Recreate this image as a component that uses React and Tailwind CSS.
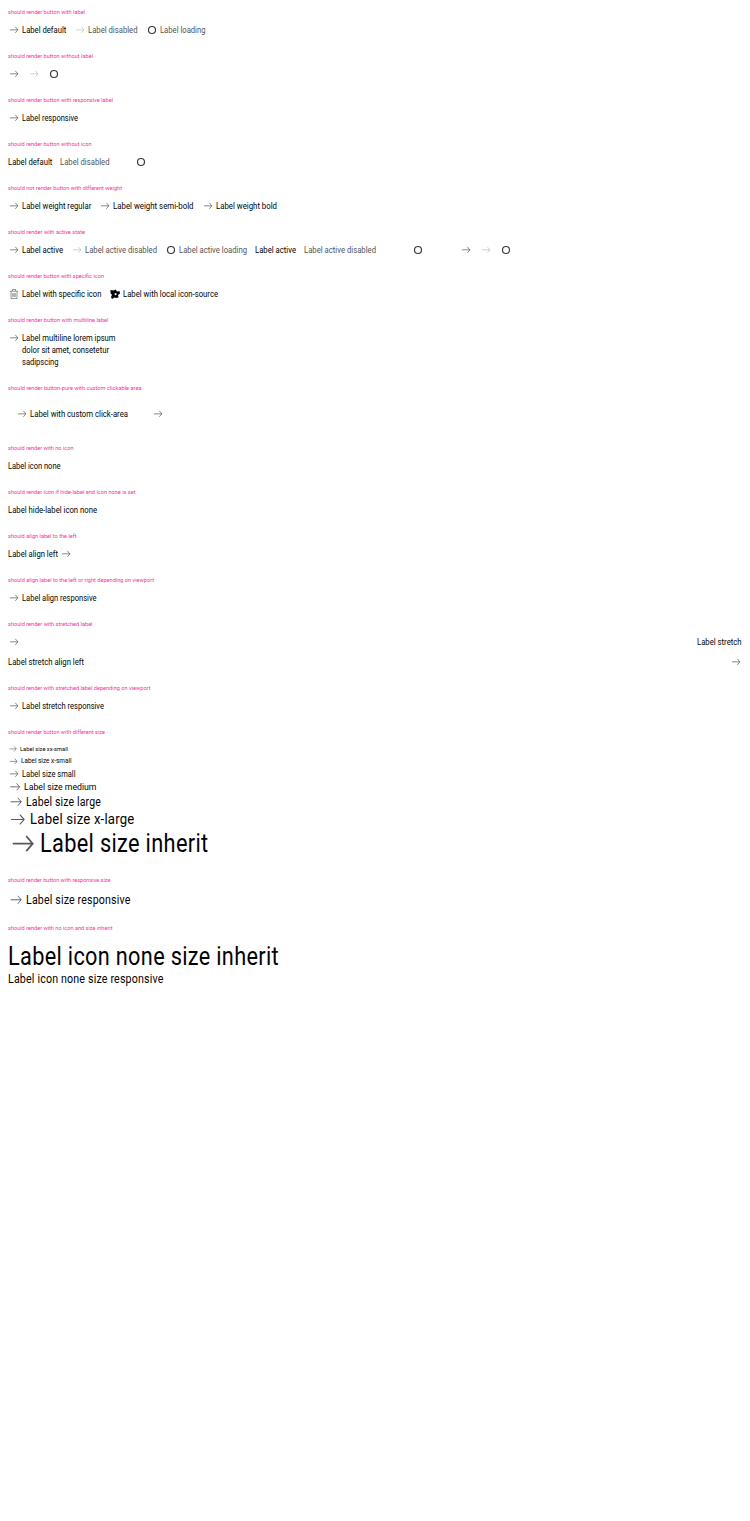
import { useLayoutEffect, useRef, useState } from "react";

// Text condensed horizontally so that it occupies exactly w pixels.
function Fit({ w, className = "", children }) {
  const ref = useRef(null);
  const [scale, setScale] = useState(1);
  useLayoutEffect(() => {
    setScale(w / parseFloat(getComputedStyle(ref.current).width));
  }, [w]);
  return (
    <span className={"block shrink-0 whitespace-nowrap " + className} style={{ width: w }}>
      <span ref={ref} className="inline-block origin-left" style={{ transform: `scaleX(${scale})` }}>
        {children}
      </span>
    </span>
  );
}

function Arrow({ className = "size-3", dim = false }) {
  return (
    <svg viewBox="0 0 24 24" className={"shrink-0 " + className} fill="none" stroke="#010205" strokeOpacity={dim ? 0.25 : 0.65} strokeWidth="1.4">
      <path d="M3.8 11.7h16M14.6 5.7l5.200 6-5.200 6" />
    </svg>
  );
}

function Spinner() {
  return (
    <svg viewBox="0 0 12 12" className="size-3 shrink-0" fill="none" stroke="#33353a" strokeWidth="1.15">
      <circle cx="6" cy="6" r="3.5" />
    </svg>
  );
}

function Trash() {
  return (
    <svg viewBox="0 0 24 24" className="size-3 shrink-0" fill="none" stroke="#010205" strokeOpacity="0.55" strokeWidth="1.5">
      <path d="M4 6.5h16M9 6V3h6v3M6 7v14h12V7M9.5 10v8M12 10v8M14.5 10v8" />
    </svg>
  );
}

function Flower() {
  return (
    <svg viewBox="0 0 24 24" className="size-3 shrink-0" fill="#010205">
      <path fillRule="evenodd" d="M3 4l6 1 4-2 3 4 5-1 1 5-4 3 1 5-5 1-3-1-5 3-2-4 2-4-3-4zM13 10l-2.500 2 2 2.500 2.500-.5v-3z" />
    </svg>
  );
}

function Section({ title, w, children }) {
  return (
    <section className="pt-1 pb-2">
      <h2 className="mb-1 h-4 text-[6.2px] leading-4 text-[#f532a0]">
        <Fit w={w}>{title}</Fit>
      </h2>
      {children}
    </section>
  );
}

function Row({ children, className = "gap-2" }) {
  return <div className={"flex h-3 items-center text-[8.4px] leading-[13px] " + className}>{children}</div>;
}

function Item({ icon = <Arrow />, w, muted, children }) {
  return (
    <div className={"flex shrink-0 items-center gap-0.5 " + (muted ? "text-[#535457]" : "")}>
      {icon}
      {children && <Fit w={w}>{children}</Fit>}
    </div>
  );
}

const sizes = [
  ["Label size xx-small", 48, "h-[10px] text-[6.2px] leading-[8px]", "size-[10px]"],
  ["Label size x-small", 50.5, "h-[14px] text-[7px] leading-[8px]", "size-[11px]"],
  ["Label size small", 53.5, "h-3 text-[8.4px] leading-[13px]", "size-3"],
  ["Label size medium", 72.5, "h-[13px] text-[9.5px] leading-none", "size-[14px]"],
  ["Label size large", 75, "h-[18px] text-[12px] leading-none tracking-[0.015em]", "size-4"],
  ["Label size x-large", 104.5, "h-[17px] text-[15px] leading-none tracking-[0.015em]", "size-[19.5px]"],
  ["Label size inherit", 168.5, "h-[31.5px] text-[26px] leading-[27px] tracking-[0.015em]", "size-[30px]"],
];

export default function App() {
  return (
    <main className="min-h-[1521px] w-full bg-white px-2 text-[#010205] [font-family:Roboto,sans-serif]">
      <Section title="should render button with label" w={77}>
        <Row>
          <Item w={44.3}>Label default</Item>
          <Item icon={<Arrow dim />} w={49.5} muted>Label disabled</Item>
          <Item icon={<Spinner />} w={45.5} muted>Label loading</Item>
        </Row>
      </Section>
      <Section title="should render button without label" w={85}>
        <Row>
          <Arrow />
          <Arrow dim />
          <Spinner />
        </Row>
      </Section>
      <Section title="should render button with responsive label" w={105}>
        <Row><Item w={56}>Label responsive</Item></Row>
      </Section>
      <Section title="should render button without icon" w={83.5}>
        <Row>
          <Fit w={44.3}>Label default</Fit>
          <Fit w={49.5} className="text-[#535457]">Label disabled</Fit>
          <div className="flex w-[46px] justify-center"><Spinner /></div>
        </Row>
      </Section>
      <Section title="should not render button with different weight" w={114}>
        <Row>
          <Item w={69.3}>Label weight regular</Item>
          <Item w={80.5}>Label weight semi-bold</Item>
          <Item w={61}>Label weight bold</Item>
        </Row>
      </Section>
      <Section title="should render with active state" w={77}>
        <Row>
          <Item w={41}>Label active</Item>
          <Item icon={<Arrow dim />} w={72} muted>Label active disabled</Item>
          <Item icon={<Spinner />} w={68} muted>Label active loading</Item>
          <Fit w={41}>Label active</Fit>
          <Fit w={72} className="text-[#535457]">Label active disabled</Fit>
          <div className="flex w-[68px] justify-center"><Spinner /></div>
          <Arrow />
          <Arrow dim />
          <Spinner />
        </Row>
      </Section>
      <Section title="should render button with specific icon" w={96}>
        <Row>
          <Item icon={<Trash />} w={79.4}>Label with specific icon</Item>
          <Item icon={<Flower />} w={95}>Label with local icon-source</Item>
        </Row>
      </Section>
      <Section title="should render button with multiline label" w={100.5}>
        <div className="flex h-9 items-start gap-0.5 text-[8.4px] leading-3">
          <Arrow />
          <div>
            <Fit w={93.5}>Label multiline lorem ipsum</Fit>
            <Fit w={87}>dolor sit amet, consetetur</Fit>
            <Fit w={36.5}>sadipscing</Fit>
          </div>
        </div>
      </Section>
      <Section title="should render button-pure with custom clickable area" w={133.5}>
        <div className="p-2">
          <Row className="gap-6">
            <Item w={98}>Label with custom click-area</Item>
            <Arrow />
          </Row>
        </div>
      </Section>
      <Section title="should render with no icon" w={65.5}>
        <Row><Fit w={52.5}>Label icon none</Fit></Row>
      </Section>
      <Section title="should render icon if hide-label and icon none is set" w={127.5}>
        <Row><Fit w={89}>Label hide-label icon none</Fit></Row>
      </Section>
      <Section title="should align label to the left" w={68.5}>
        <Row className="gap-0.5"><Fit w={50}>Label align left</Fit><Arrow /></Row>
      </Section>
      <Section title="should align label to the left or right depending on viewport" w={146}>
        <Row><Item w={74.5}>Label align responsive</Item></Row>
      </Section>
      <Section title="should render with stretched label" w={84.5}>
        <Row className="mb-2 justify-between"><Arrow /><Fit w={44.6}>Label stretch</Fit></Row>
        <Row className="justify-between"><Fit w={76}>Label stretch align left</Fit><Arrow /></Row>
      </Section>
      <Section title="should render with stretched label depending on viewport" w={142.5}>
        <Row><Item w={82}>Label stretch responsive</Item></Row>
      </Section>
      <Section title="should render button with different size" w={97}>
        {sizes.map(([label, w, row, icon]) => (
          <div key={label} className={"flex items-center gap-0.5 " + row}>
            <Arrow className={icon} />
            <Fit w={w}>{label}</Fit>
          </div>
        ))}
      </Section>
      <Section title="should render button with responsive size" w={102.5}>
        <div className="flex h-[16.5px] items-center gap-0.5 text-[12px] leading-none tracking-[0.015em]">
          <Arrow className="size-4" />
          <Fit w={104.5}>Label size responsive</Fit>
        </div>
      </Section>
      <Section title="should render with no icon and size inherit" w={104.5}>
        <div className="flex h-[31.5px] items-center text-[26px] leading-none tracking-[0.015em]"><Fit w={271}>Label icon none size inherit</Fit></div>
        <div className="flex h-[15px] items-center text-[12px] leading-none tracking-[0.015em]"><Fit w={155.5}>Label icon none size responsive</Fit></div>
      </Section>
    </main>
  );
}
